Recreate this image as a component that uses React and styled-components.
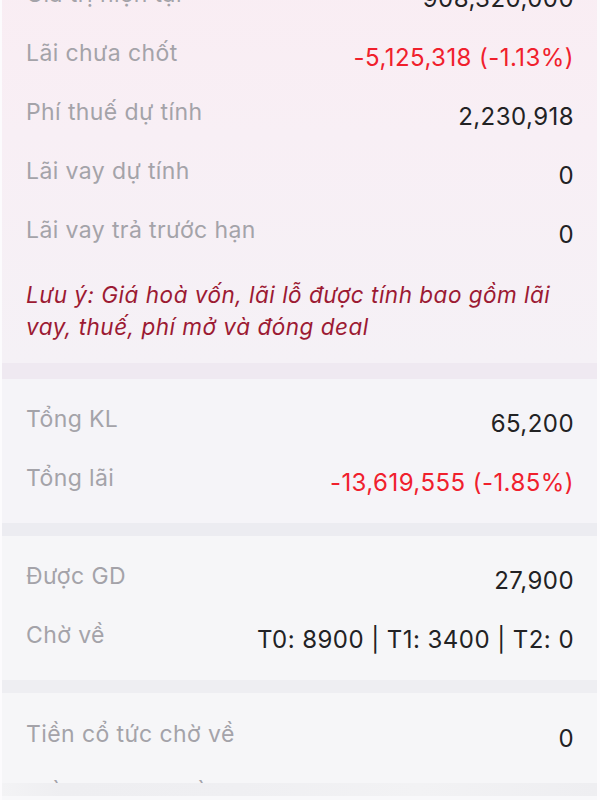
import React from "react";
import styled, { createGlobalStyle } from "styled-components";

const Global = createGlobalStyle`
  html, body { margin: 0; padding: 0; background: #f6f6f8; }
  body { font-family: Inter, "Noto Sans", "Liberation Sans", sans-serif; -webkit-font-smoothing: antialiased; }
`;

const Page = styled.div`
  width: 600px;
  height: 800px;
  overflow: hidden;
  position: relative;
  box-sizing: border-box;
  border-left: 2px solid #fcfbfd;
  border-right: 3px solid #fcfbfd;
  background: #f6f6f8;
`;

const Section = styled.section`
  padding: ${(p) => p.$pt}px 23px ${(p) => p.$pb}px 24px;
  margin-top: ${(p) => p.$mt || 0}px;
  background: ${(p) => p.$bg};
`;

const Divider = styled.div`
  height: ${(p) => p.$h}px;
  background: ${(p) => p.$bg};
`;

const Row = styled.div`
  display: flex;
  justify-content: space-between;
  align-items: flex-start;
  height: 59px;
`;

const Label = styled.span`
  font-size: 23px;
  line-height: 28px;
  color: #a4a3a9;
  letter-spacing: 0.4px;
`;

const Value = styled.span`
  font-size: 24px;
  line-height: 28px;
  margin-top: 5px;
  color: ${(p) => (p.$neg ? "#f0202c" : "#222224")};
  letter-spacing: 0.45px;
`;

const Note = styled.p`
  margin: 4px 0 0;
  font-size: 22.5px;
  line-height: 32px;
  font-style: italic;
  color: #9c1a33;
  letter-spacing: 0.5px;
`;

const BottomBar = styled.div`
  position: absolute;
  left: 0;
  right: 0;
  bottom: 0;
  height: 17px;
  background: linear-gradient(90deg, #f3f3f5 0%, #eeeef1 10%, #efeff2 40%, #f2f2f4 70%, #eeeef1 100%);
  border-bottom: 4px solid #f8f8fa;
  box-sizing: border-box;
`;

const rows1 = [
  ["Giá trị hiện tại", "908,320,000"],
  ["Lãi chưa chốt", "-5,125,318 (-1.13%)", true],
  ["Phí thuế dự tính", "2,230,918"],
  ["Lãi vay dự tính", "0"],
  ["Lãi vay trả trước hạn", "0"],
];

const rows2 = [
  ["Tổng KL", "65,200"],
  ["Tổng lãi", "-13,619,555 (-1.85%)", true],
];

const rows3 = [
  ["Được GD", "27,900"],
  ["Chờ về", "T0: 8900 | T1: 3400 | T2: 0"],
];

const rows4 = [
  ["Tiền cổ tức chờ về", "0"],
  ["Tiền bán chờ về", "0"],
];

const renderRows = (rows) =>
  rows.map(([l, v, neg]) => (
    <Row key={l}>
      <Label>{l}</Label>
      <Value $neg={neg}>{v}</Value>
    </Row>
  ));

export default function App() {
  return (
    <>
      <Global />
      <Page>
        <Section
          $mt={-20}
          $pt={0}
          $pb={20}
          $bg="linear-gradient(180deg, #f9edf3 0%, #f8eff5 40%, #f5f1f6 100%)"
        >
          {renderRows(rows1)}
          <Note>
            Lưu ý: Giá hoà vốn, lãi lỗ được tính bao gồm lãi vay, thuế, phí mở và đóng deal
          </Note>
        </Section>
        <Divider $h={16} $bg="#efe9f1" />
        <Section $pt={26} $pb={0} $bg="#f5f4f8">
          {renderRows(rows2)}
        </Section>
        <Divider $h={13} $bg="#ececf1" />
        <Section $pt={26} $pb={0} $bg="#f6f6f8">
          {renderRows(rows3)}
        </Section>
        <Divider $h={13} $bg="#eeeef2" />
        <Section $pt={27} $pb={0} $bg="#f6f6f8">
          {renderRows(rows4)}
        </Section>
        <BottomBar />
      </Page>
    </>
  );
}
